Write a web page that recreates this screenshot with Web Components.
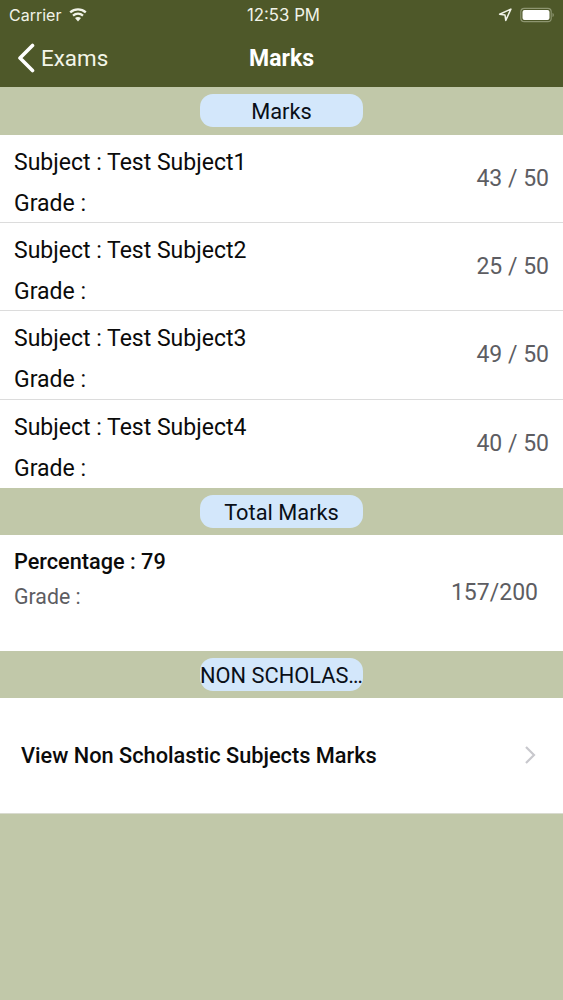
<!DOCTYPE html>
<html>
<head>
<meta charset="utf-8">
<title>Marks</title>
<style>
  html, body { margin: 0; padding: 0; }
  body { width: 563px; height: 1000px; overflow: hidden; background: #c1c8a9; font-family: Roboto, sans-serif; }
</style>
</head>
<body>
<app-navbar title="Marks" back="Exams"></app-navbar>

<section-header>Marks</section-header>
<mark-row subject="Test Subject1" score="43 / 50"></mark-row>
<mark-row subject="Test Subject2" score="25 / 50"></mark-row>
<mark-row subject="Test Subject3" score="49 / 50"></mark-row>
<mark-row subject="Test Subject4" score="40 / 50" last></mark-row>

<section-header>Total Marks</section-header>
<total-card percentage="79" total="157/200"></total-card>

<section-header>NON SCHOLAS…</section-header>
<link-row>View Non Scholastic Subjects Marks</link-row>

<script>
class AppNavbar extends HTMLElement {
  constructor() {
    super();
    this.shadowDOM = this.attachShadow({ mode: "open" });
  }

  connectedCallback() {
    this.shadowDOM.innerHTML = `
      <style>
      :host { display: block; height: 87px; background: #4e5829; color: #fff; }
      .status {
        height: 29px;
        display: grid;
        grid-template-columns: 1fr auto 1fr;
        align-items: center;
        padding: 0 8px 0 9px;
        font: 16px Inter, sans-serif;
        color: #f1f3e8;
      }
      .left { display: flex; align-items: center; gap: 7px; }
      .time { font-size: 16.800px; margin-left: 3px; }
      .right { display: flex; align-items: center; justify-content: flex-end; gap: 8px; }
      svg { display: block; }
      .bar {
        height: 58px;
        display: grid;
        grid-template-columns: 1fr auto 1fr;
        align-items: center;
        padding: 0 17px;
      }
      .back { display: flex; align-items: center; gap: 6px; font: 22.400px Roboto, sans-serif; color: #f3f5e8; margin-top: -1px; }
      .title { font: 700 23px Roboto, sans-serif; }
      </style>
      <div class="status">
        <div class="left">
          <span>Carrier</span>
          <svg width="20" height="15" viewBox="0 0 20 15">
            <path d="M10 14.500 7 11c1.800-1.500 4.200-1.500 6 0z" fill="#f1f3e8"/>
            <path d="M5 8.600c2.900-2.500 7.100-2.500 10 0M2.200 5.400c4.500-4 11.100-4 15.600 0" fill="none" stroke="#f1f3e8" stroke-width="2.300"/>
          </svg>
        </div>
        <span class="time">12:53 PM</span>
        <div class="right">
          <svg width="14" height="14" viewBox="0 0 13 13">
            <path d="M12 1 1.500 5.800l5 .7.700 5z" fill="none" stroke="#f1f3e8" stroke-width="1.400" stroke-linejoin="round"/>
          </svg>
          <svg width="35" height="16" viewBox="0 0 35 16">
            <rect x=".8" y="1.300" width="30.400" height="13.400" rx="3.500" fill="none" stroke="#8d9570" stroke-width="1.200"/>
            <rect x="2.500" y="3" width="27" height="10" rx="2" fill="#fff"/>
            <path d="M32.500 6v4c.9-.3 1.300-1 1.300-2s-.4-1.700-1.300-2z" fill="#8d9570"/>
          </svg>
        </div>
      </div>
      <div class="bar">
        <div class="back">
          <svg width="18" height="30" viewBox="0 0 18 30">
            <path d="M15.500 2.500 3 15l12.500 12.500" fill="none" stroke="#fff" stroke-width="3.600" stroke-linecap="round" stroke-linejoin="round"/>
          </svg>
          <span>${this.getAttribute("back")}</span>
        </div>
        <div class="title">${this.getAttribute("title")}</div>
      </div>`;
  }
}

class SectionHeader extends HTMLElement {
  constructor() {
    super();
    this.shadowDOM = this.attachShadow({ mode: "open" });
  }

  connectedCallback() {
    this.shadowDOM.innerHTML = `
      <style>
      :host { display: flex; justify-content: center; align-items: center; height: 47.500px; background: #c1c8a9; }
      .pill {
        width: 163px;
        height: 33px;
        border-radius: 13px;
        background: #d3e7fb;
        color: #0a0f18;
        font: 21.800px/35px Roboto, sans-serif;
        text-align: center;
        white-space: nowrap;
      }
      </style>
      <div class="pill"><slot></slot></div>`;
  }
}

class MarkRow extends HTMLElement {
  constructor() {
    super();
    this.shadowDOM = this.attachShadow({ mode: "open" });
  }

  connectedCallback() {
    this.shadowDOM.innerHTML = `
      <style>
      :host {
        display: flex;
        justify-content: space-between;
        align-items: center;
        box-sizing: border-box;
        height: 88.400px;
        padding: 0 14px;
        background: #fff;
        border-bottom: 1px solid #dcdcdc;
      }
      :host([last]) { border-bottom: 0; height: 88px; }
      .info { align-self: flex-start; color: #0b0b0b; font: 23px/41px Roboto, sans-serif; padding-top: 7px; }
      .score { color: #5d5d62; font: 23px Roboto, sans-serif; }
      </style>
      <div class="info">
        <div>Subject : ${this.getAttribute("subject")}</div>
        <div>Grade :</div>
      </div>
      <div class="score">${this.getAttribute("score")}</div>`;
  }
}

class TotalCard extends HTMLElement {
  constructor() {
    super();
    this.shadowDOM = this.attachShadow({ mode: "open" });
  }

  connectedCallback() {
    this.shadowDOM.innerHTML = `
      <style>
      :host {
        display: flex;
        justify-content: space-between;
        box-sizing: border-box;
        height: 115.500px;
        padding: 13px 25px 0 14px;
        background: #fff;
      }
      .pct { font: 500 21.700px/28px Roboto, sans-serif; color: #0b0b0b; }
      .grade { font: 21.300px/28px Roboto, sans-serif; color: #5d5d62; margin-top: 7px; }
      .total { font: 23px/28px Roboto, sans-serif; color: #5d5d62; margin-top: 31px; }
      </style>
      <div>
        <div class="pct">Percentage : ${this.getAttribute("percentage")}</div>
        <div class="grade">Grade :</div>
      </div>
      <div class="total">${this.getAttribute("total")}</div>`;
  }
}

class LinkRow extends HTMLElement {
  constructor() {
    super();
    this.shadowDOM = this.attachShadow({ mode: "open" });
  }

  connectedCallback() {
    this.shadowDOM.innerHTML = `
      <style>
      :host {
        display: flex;
        justify-content: space-between;
        align-items: center;
        box-sizing: border-box;
        height: 115.500px;
        padding: 0 27px 0 21px;
        background: #fff;
        border-bottom: 1px solid #d9dbd0;
        font: 500 21.750px Roboto, sans-serif;
        color: #0b0b0b;
      }
      svg { display: block; }
      </style>
      <span><slot></slot></span>
      <svg width="12" height="20" viewBox="0 0 12 20">
        <path d="M2 2l8 8-8 8" fill="none" stroke="#c8c8cd" stroke-width="2.200"/>
      </svg>`;
  }
}

customElements.define("app-navbar", AppNavbar);
customElements.define("section-header", SectionHeader);
customElements.define("mark-row", MarkRow);
customElements.define("total-card", TotalCard);
customElements.define("link-row", LinkRow);
</script>
</body>
</html>
